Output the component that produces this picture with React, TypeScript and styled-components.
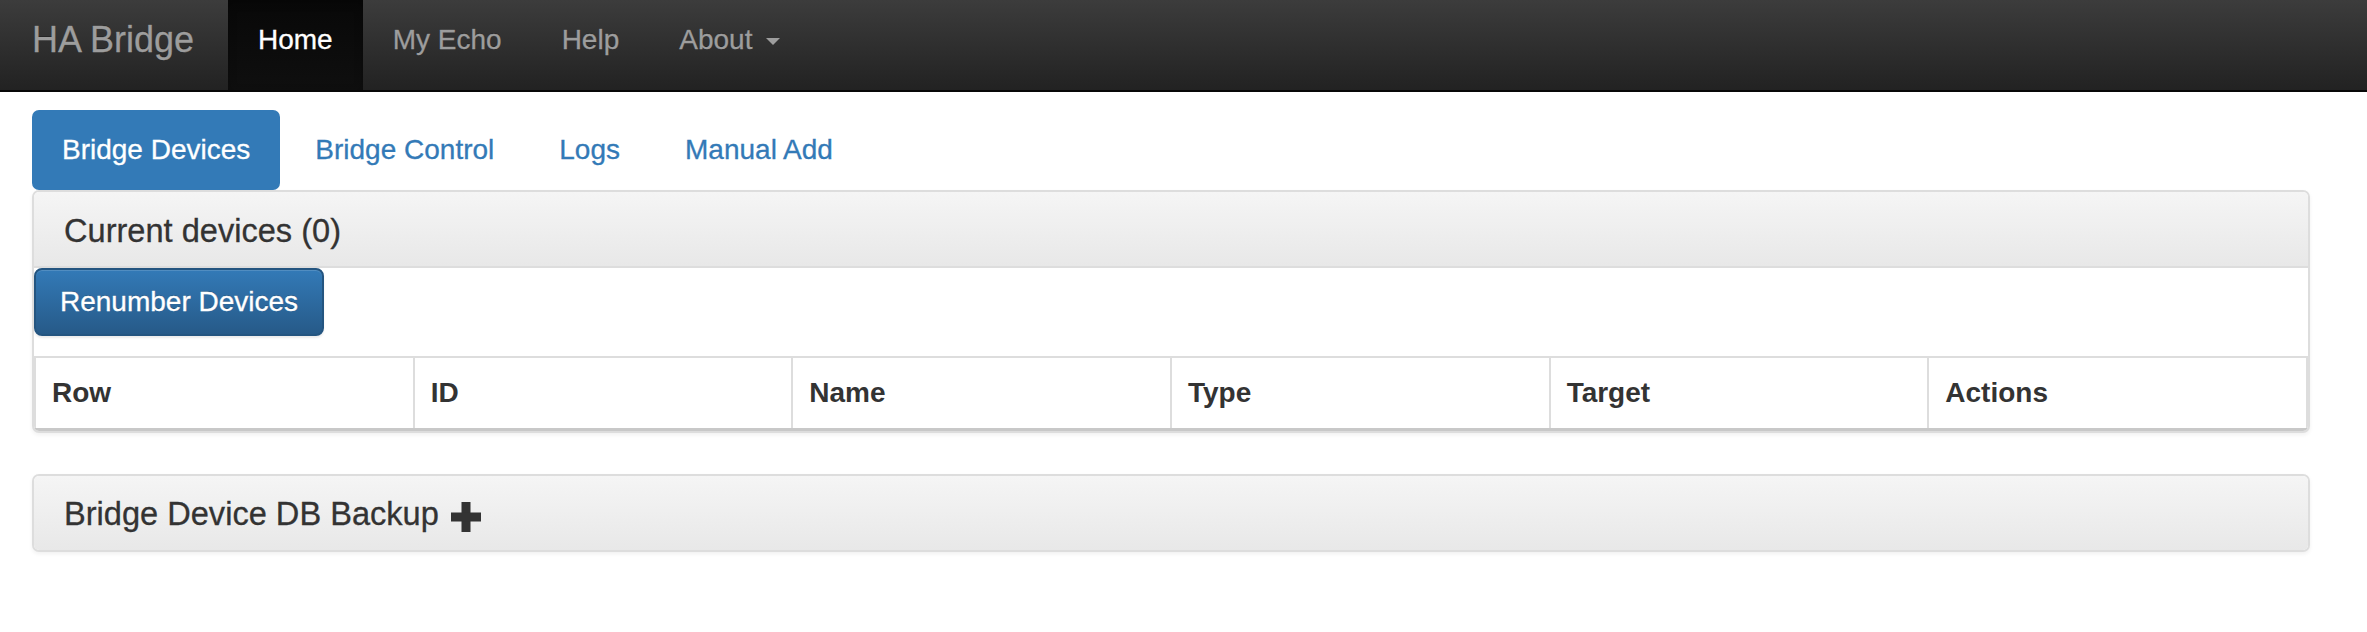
import React from "react";
import styled, { createGlobalStyle, css } from "styled-components";

const GlobalStyle = createGlobalStyle`
  html, body {
    margin: 0;
    padding: 0;
    background: #fff;
  }
  body {
    font-family: "Liberation Sans", Arial, Helvetica, sans-serif;
    color: #333;
    -webkit-text-stroke: 0.3px currentColor;
  }
  * { box-sizing: border-box; }
`;

const Navbar = styled.nav`
  display: flex;
  align-items: stretch;
  height: 92px;
  background: linear-gradient(to bottom, #3c3c3c 0%, #222 100%);
  border-bottom: 2px solid #080808;
`;

const Brand = styled.a`
  display: flex;
  align-items: center;
  width: 228px;
  padding: 0 0 10px 32px;
  font-size: 36px;
  color: #9d9d9d;
  text-decoration: none;
  text-shadow: 0 -1px 0 rgba(0, 0, 0, 0.25);
`;

const NavList = styled.ul`
  display: flex;
  margin: 0;
  padding: 0;
  list-style: none;
`;

const NavLink = styled.a<{ $active?: boolean }>`
  display: flex;
  align-items: center;
  height: 100%;
  padding: 0 30px 11px;
  font-size: 28px;
  color: #9d9d9d;
  text-decoration: none;
  text-shadow: 0 -1px 0 rgba(0, 0, 0, 0.25);
  ${(p) =>
    p.$active &&
    css`
      color: #fff;
      background: linear-gradient(to bottom, #080808 0%, #0f0f0f 100%);
      box-shadow: inset 0 3px 9px rgba(0, 0, 0, 0.25);
    `}
`;

const Caret = styled.span`
  display: inline-block;
  width: 0;
  height: 0;
  margin-left: 14px;
  margin-top: 4px;
  border-top: 7px solid #9d9d9d;
  border-left: 7.5px solid transparent;
  border-right: 7.5px solid transparent;
`;

const Main = styled.main`
  padding: 18px 57px 0 32px;
`;

const Tabs = styled.ul`
  display: flex;
  gap: 5px;
  margin: 0;
  padding: 0;
  list-style: none;
`;

const Tab = styled.a<{ $active?: boolean }>`
  display: flex;
  align-items: center;
  height: 80px;
  padding: 0 30px;
  font-size: 28px;
  color: #337ab7;
  text-decoration: none;
  border-radius: 7px;
  ${(p) =>
    p.$active &&
    css`
      color: #fff;
      background: #337ab7;
    `}
`;

const Panel = styled.section`
  border: 2px solid #ddd;
  border-radius: 7px;
  background: #fff;
  box-shadow: 0 2px 4px rgba(0, 0, 0, 0.06);
  margin-bottom: 41px;
  overflow: hidden;
`;

const PanelHeading = styled.div<{ $last?: boolean }>`
  display: flex;
  align-items: center;
  height: ${(p) => (p.$last ? "74px" : "76px")};
  padding: 3px 30px 0;
  background: linear-gradient(to bottom, #f5f5f5 0%, #e8e8e8 100%);
  border-bottom: ${(p) => (p.$last ? "none" : "2px solid #ddd")};
`;

const PanelTitle = styled.h3`
  margin: 0;
  font-size: 32.6px;
  font-weight: normal;
  color: #333;
  display: flex;
  align-items: center;
`;

const PanelBody = styled.div`
  display: flex;
  flex-direction: column;
  align-items: flex-start;
  gap: 20px;
`;

const PrimaryButton = styled.button`
  height: 68px;
  padding: 0 24px;
  font-family: inherit;
  font-size: 28px;
  color: #fff;
  background: linear-gradient(to bottom, #337ab7 0%, #265a88 100%);
  border: 2px solid #245580;
  border-radius: 8px;
  text-shadow: 0 -1px 0 rgba(0, 0, 0, 0.2);
  box-shadow: inset 0 1px 0 rgba(255, 255, 255, 0.15),
    0 2px 2px rgba(0, 0, 0, 0.075);
  -webkit-text-stroke: 0.3px currentColor;
  cursor: pointer;
`;

const Table = styled.table`
  width: 100%;
  table-layout: fixed;
  border-collapse: collapse;
  border-top: 2px solid #ddd;
  border-left: 2px solid #ddd;
  border-right: 2px solid #ddd;
`;

const Th = styled.th`
  height: 72px;
  padding: 0 16px;
  text-align: left;
  font-size: 28px;
  font-weight: bold;
  color: #333;
  -webkit-text-stroke: 0;
  border-left: 2px solid #ddd;
  border-bottom: 3px solid #c8c8c8;
  &:first-child {
    border-left: none;
  }
`;

const PlusIcon = styled.svg`
  width: 30px;
  height: 30px;
  margin-left: 12px;
  margin-top: 6px;
  fill: #333;
`;

const columns = ["Row", "ID", "Name", "Type", "Target", "Actions"];

export default function App() {
  return (
    <>
      <GlobalStyle />
      <Navbar>
        <Brand href="#">HA Bridge</Brand>
        <NavList>
          <li>
            <NavLink href="#" $active>
              Home
            </NavLink>
          </li>
          <li>
            <NavLink href="#">My Echo</NavLink>
          </li>
          <li>
            <NavLink href="#">Help</NavLink>
          </li>
          <li>
            <NavLink href="#">
              About
              <Caret />
            </NavLink>
          </li>
        </NavList>
      </Navbar>
      <Main>
        <Tabs>
          <li>
            <Tab href="#" $active>
              Bridge Devices
            </Tab>
          </li>
          <li>
            <Tab href="#">Bridge Control</Tab>
          </li>
          <li>
            <Tab href="#">Logs</Tab>
          </li>
          <li>
            <Tab href="#">Manual Add</Tab>
          </li>
        </Tabs>
        <Panel>
          <PanelHeading>
            <PanelTitle>Current devices (0)</PanelTitle>
          </PanelHeading>
          <PanelBody>
            <PrimaryButton>Renumber Devices</PrimaryButton>
            <Table>
              <thead>
                <tr>
                  {columns.map((c) => (
                    <Th key={c}>{c}</Th>
                  ))}
                </tr>
              </thead>
            </Table>
          </PanelBody>
        </Panel>
        <Panel>
          <PanelHeading $last>
            <PanelTitle>
              Bridge Device DB Backup
              <PlusIcon viewBox="0 0 30 30">
                <rect x="10.5" y="0" width="9" height="30" />
                <rect x="0" y="10.5" width="30" height="9" />
              </PlusIcon>
            </PanelTitle>
          </PanelHeading>
        </Panel>
      </Main>
    </>
  );
}
